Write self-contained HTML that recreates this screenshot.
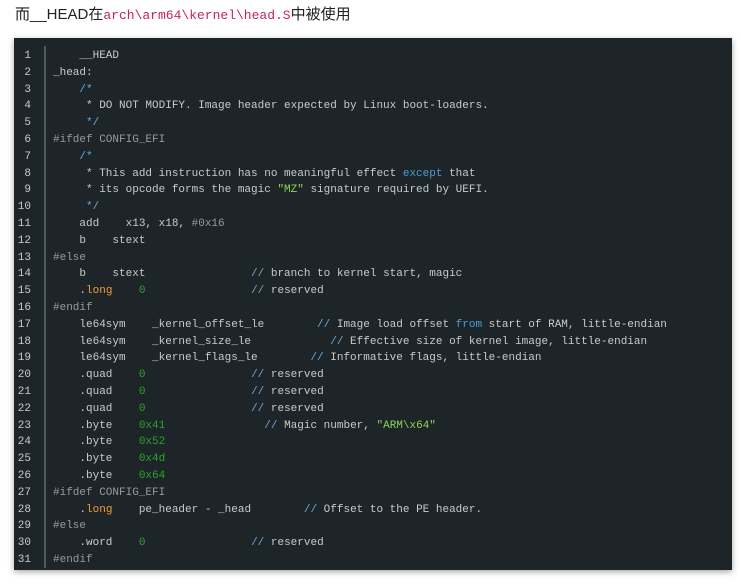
<!DOCTYPE html>
<html><head><meta charset="utf-8"><style>
body{margin:0;background:#fff;width:741px;height:586px;overflow:hidden;font-family:"Liberation Sans","Noto Sans CJK SC",sans-serif}
.t{position:absolute;left:15px;top:3px;font-size:15px;color:#222;white-space:nowrap}
.t code{font-family:"Liberation Mono",monospace;color:#c7254e;font-size:13px}
.blk{position:absolute;left:14px;top:38px;width:718px;height:532px;background:#1e2528;box-shadow:0 2px 6px rgba(0,0,0,.35)}
.gut{position:absolute;left:30px;top:8px;width:2px;height:522px;background:#4d5b5c}
pre{margin:0;position:absolute;top:48px;font-family:"Liberation Mono",monospace;font-size:11px;line-height:16.8px;color:#c8cacb}
.ln{left:14px;width:17px;text-align:right;color:#c8cacb}
.cd{left:53px}
.s{color:#6aa8d8}.k{color:#f09a36}.n{color:#2ea12e}.p{color:#999}.b{color:#4b9cd3}.g{color:#8ed35a}
</style></head><body>
<div class="t">而__HEAD在<code>arch\arm64\kernel\head.S</code>中被使用</div>
<div class="blk"><div class="gut"></div></div>
<pre class="ln">1
2
3
4
5
6
7
8
9
10
11
12
13
14
15
16
17
18
19
20
21
22
23
24
25
26
27
28
29
30
31</pre>
<pre class="cd">    __HEAD
_head:
    <span class="s">/*</span>
     * DO NOT MODIFY. Image header expected by Linux boot-loaders.
     <span class="s">*/</span>
<span class="p">#ifdef CONFIG_EFI</span>
    <span class="s">/*</span>
     * This add instruction has no meaningful effect <span class="b">except</span> that
     * its opcode forms the magic <span class="g">"MZ"</span> signature required by UEFI.
     <span class="s">*/</span>
    add    x13, x18, <span class="p">#0x16</span>
    b    stext
<span class="p">#else</span>
    b    stext                <span class="s">//</span> branch to kernel start, magic
    .<span class="k">long</span>    <span class="n">0</span>                <span class="s">//</span> reserved
<span class="p">#endif</span>
    le64sym    _kernel_offset_le        <span class="s">//</span> Image load offset <span class="b">from</span> start of RAM, little-endian
    le64sym    _kernel_size_le            <span class="s">//</span> Effective size of kernel image, little-endian
    le64sym    _kernel_flags_le        <span class="s">//</span> Informative flags, little-endian
    .quad    <span class="n">0</span>                <span class="s">//</span> reserved
    .quad    <span class="n">0</span>                <span class="s">//</span> reserved
    .quad    <span class="n">0</span>                <span class="s">//</span> reserved
    .byte    <span class="n">0x41</span>               <span class="s">//</span> Magic number, <span class="g">"ARM\x64"</span>
    .byte    <span class="n">0x52</span>
    .byte    <span class="n">0x4d</span>
    .byte    <span class="n">0x64</span>
<span class="p">#ifdef CONFIG_EFI</span>
    .<span class="k">long</span>    pe_header - _head        <span class="s">//</span> Offset to the PE header.
<span class="p">#else</span>
    .word    <span class="n">0</span>                <span class="s">//</span> reserved
<span class="p">#endif</span></pre>
</body></html>
